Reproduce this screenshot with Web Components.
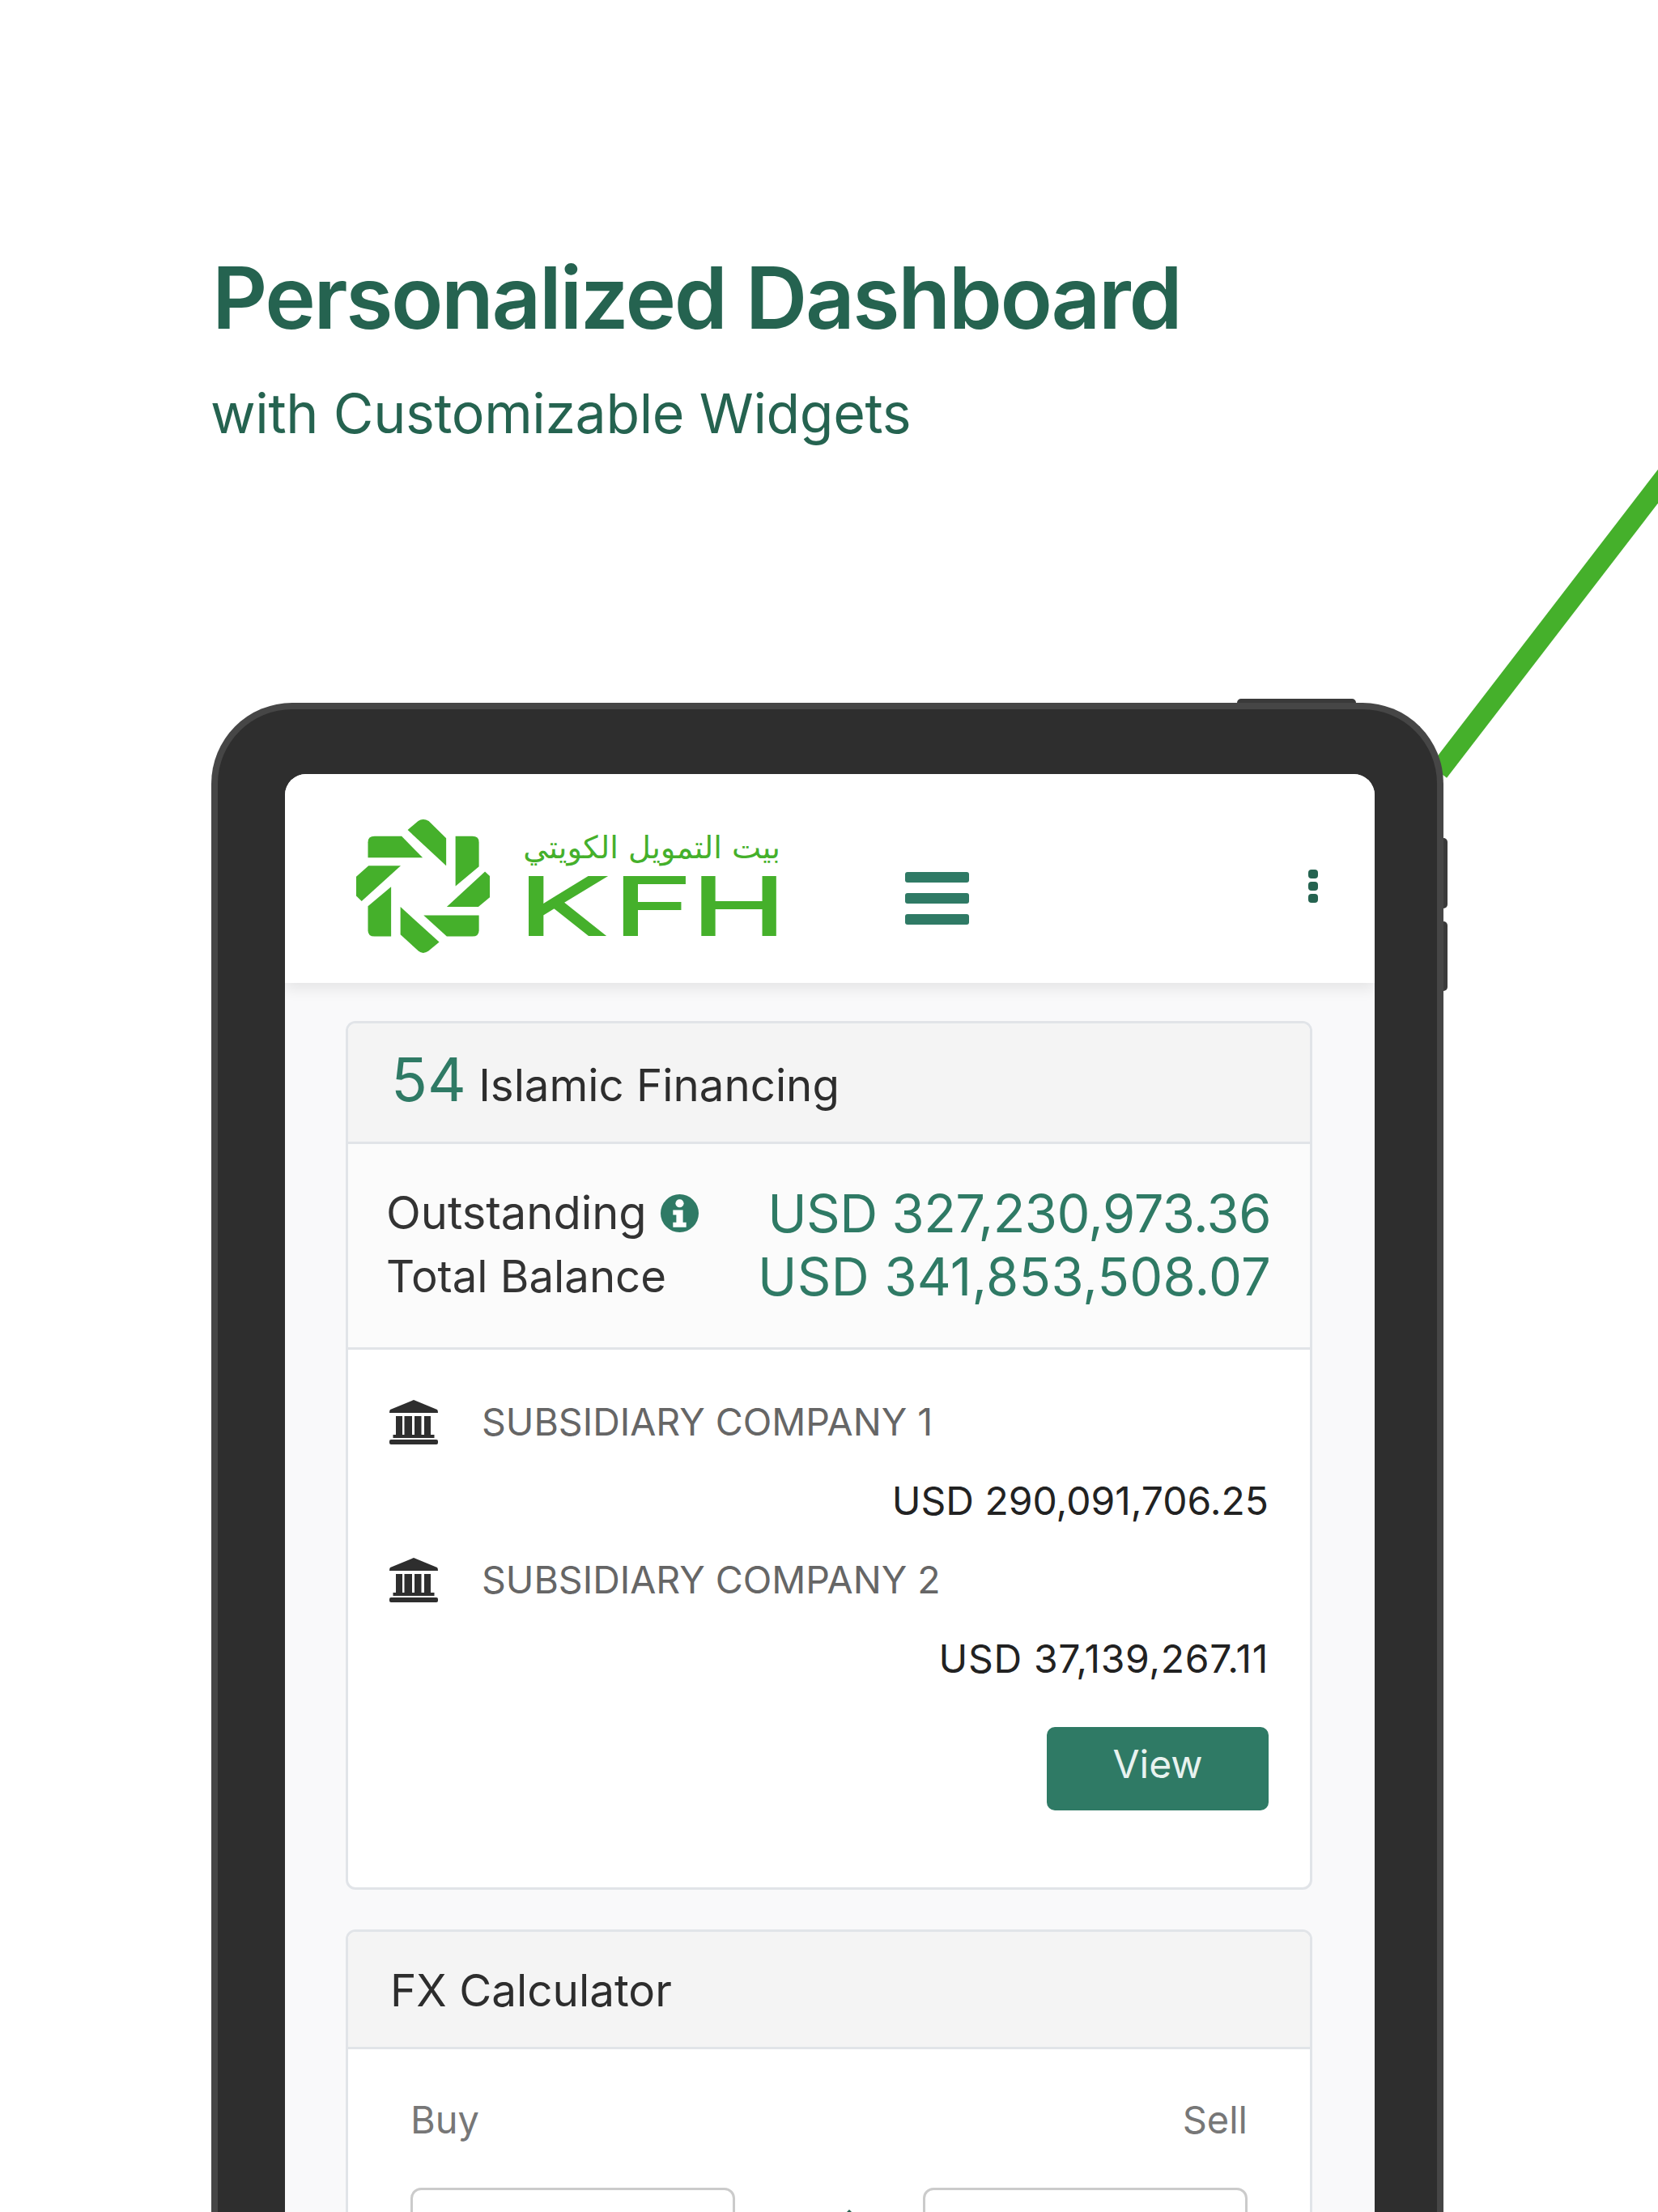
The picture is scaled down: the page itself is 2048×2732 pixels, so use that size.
<!DOCTYPE html>
<html>
<head>
<meta charset="utf-8">
<title>KFH dashboard</title>
<style>
  html, body { margin: 0; padding: 0; background: #fff; }
  body { width: 2048px; height: 2732px; overflow: hidden; position: relative; font-family: Inter, "Liberation Sans", sans-serif; }
</style>
</head>
<body>
<promo-page>
  <span slot="title">Personalized Dashboard</span>
  <span slot="subtitle">with Customizable Widgets</span>
  <tablet-frame>
    <app-header></app-header>
    <dash-card>
      <span slot="head"><span style="color:#2f7a65;font-size:74px">54</span> Islamic Financing</span>
      <balance-rows></balance-rows>
      <company-row name="SUBSIDIARY COMPANY 1" amount="USD 290,091,706.25"></company-row>
      <company-row name="SUBSIDIARY COMPANY 2" amount="USD 37,139,267.11" spacing="0.7px"></company-row>
      <view-button>View</view-button>
    </dash-card>
    <dash-card variant="fx">
      <span slot="head">FX Calculator</span>
      <fx-calc></fx-calc>
    </dash-card>
  </tablet-frame>
</promo-page>

<script>
const FONT = 'Inter, "Liberation Sans", sans-serif';

// page with the heading and the green stripe behind the tablet
class PromoPage extends HTMLElement {
  constructor() {
    super();
    this.attachShadow({mode: 'open'}).innerHTML = `
    <style>
      :host { display: block; position: relative; width: 2048px; height: 2732px; overflow: hidden; font-family: ${FONT}; }
      .stripe { position: absolute; left: 0; top: 0; }
      .head { position: relative; padding: 312px 0 0 262px; height: 556px; box-sizing: border-box; color: #256350; }
      .title { font-size: 106px; line-height: 112px; font-weight: 600; letter-spacing: -2.4px; }
      .sub { font-size: 68px; line-height: 80px; margin: 46px 0 0 -2px; letter-spacing: -0.37px; font-weight: 400; }
    </style>
    <svg class="stripe" width="2048" height="1000"><line x1="1777" y1="953" x2="2080" y2="559" stroke="#45b02b" stroke-width="25.4"/></svg>
    <div class="head">
      <div class="title"><slot name="title"></slot></div>
      <div class="sub"><slot name="subtitle"></slot></div>
    </div>
    <slot></slot>`;
  }
}

class TabletFrame extends HTMLElement {
  constructor() {
    super();
    this.attachShadow({mode: 'open'}).innerHTML = `
    <style>
      :host { display: block; position: relative; margin: 312px 0 0 261px; width: 1522px; height: 1900px; }
      .body { box-sizing: border-box; width: 100%; height: 100%; background: #2e2e2e; border: 8px solid #464646; border-bottom: 0; border-radius: 100px 100px 0 0; padding: 80px 77px 0 83px; }
      .screen { height: 100%; background: #f9f9fa; border-radius: 26px 26px 0 0; overflow: hidden; }
      .pad { display: flex; flex-direction: column; gap: 49px; padding: 47px 77px 0 75px; }
      .btn { position: absolute; background: #3a3a3a; }
      .top { left: 1267px; top: -5px; width: 147px; height: 5px; border-radius: 5px 5px 0 0; }
      .r1 { left: 1522px; top: 167px; width: 5px; height: 87px; border-radius: 0 5px 5px 0; }
      .r2 { left: 1522px; top: 270px; width: 5px; height: 86px; border-radius: 0 5px 5px 0; }
    </style>
    <div class="btn top"></div><div class="btn r1"></div><div class="btn r2"></div>
    <div class="body"><div class="screen">
      <slot name="bar"></slot>
      <div class="pad"><slot></slot></div>
    </div></div>`;
  }
  connectedCallback() {
    const h = this.querySelector('app-header');
    if (h) h.slot = 'bar';
  }
}

class AppHeader extends HTMLElement {
  constructor() {
    super();
    this.attachShadow({mode: 'open'}).innerHTML = `
    <style>
      :host { display: block; background: #fff; height: 258px; box-shadow: 0 8px 16px rgba(0,0,0,.08); position: relative; }
      .row { display: flex; align-items: flex-start; height: 100%; padding-left: 88px; }
      .star { margin-top: 56px; flex: none; }
      .word { margin-left: 47px; margin-top: 69px; width: 310px; flex: none; color: #45b02b; }
      .ar { font: 400 38.4px/44px "DejaVu Sans", sans-serif; height: 44px; direction: rtl; text-align: right; white-space: nowrap; margin-right: -2px; }
      .kfh { display: flex; margin-top: 14px; height: 73px; font: 200 93px/73px Inter, sans-serif; -webkit-text-stroke: 6px #45b02b; }
      .kfh span { display: block; flex: none; transform-origin: left center; height: 73px; overflow: visible; }
      .burger { margin: 121px 0 0 156px; width: 79px; display: flex; flex-direction: column; gap: 13px; flex: none; }
      .burger i { display: block; height: 13px; background: #2f7a65; border-radius: 3px; }
      .dots { margin: 118px 70px 0 auto; display: flex; flex-direction: column; gap: 4px; }
      .dots i { display: block; width: 12px; height: 11px; background: #256350; border-radius: 4px; }
    </style>
    <div class="row">
      <svg class="star" width="165" height="165" viewBox="84 -24 444 492" preserveAspectRatio="none" fill="#45b02b">
        <path d="M123 117V60Q123 38 145 38H235L305 117Z"/>
        <path d="M255 15L290 -18Q306 -30 325 -18L383 45V147Z"/>
        <path d="M414 38H470Q492 38 492 60V150L414 222Z"/>
        <path d="M512 168L548 205Q562 225 548 245L490 298H385Z"/>
        <path d="M308 329H492V385Q492 407 470 407H385Z"/>
        <path d="M231 298L360 428L325 460Q306 476 290 460L231 400Z"/>
        <path d="M123 296L200 224V407H145Q123 407 123 385Z"/>
        <path d="M232 147L102 277L65 238Q50 220 65 205L125 147Z"/>
      </svg>
      <div class="word">
        <div class="ar" lang="ar">بيت التمويل الكويتي</div>
        <div class="kfh"><span style="width:114px;transform:translateX(-11px) scaleX(1.78)">K</span><span style="width:101px;transform:translateX(-8px) scaleX(1.76)">F</span><span style="width:95px;transform:translateX(-12px) scaleX(1.68)">H</span></div>
      </div>
      <div class="burger"><i></i><i></i><i></i></div>
      <div class="dots"><i></i><i></i><i></i></div>
    </div>`;
  }
}

class DashCard extends HTMLElement {
  constructor() {
    super();
    this.attachShadow({mode: 'open'}).innerHTML = `
    <style>
      :host { display: block; background: #fff; border: 3px solid #e1e4e8; border-radius: 12px; overflow: hidden; }
      :host([variant="fx"]) .head { height: 145px; line-height: 144px; padding-left: 52px; font-size: 54.8px; }
      .head { box-sizing: border-box; height: 149px; padding: 0 0 0 53px; line-height: 139px; background: #f4f4f4; border-bottom: 3px solid #e1e4e8; font-size: 54.6px; color: #2d2d2d; white-space: nowrap; }
      .body { display: block; }
    </style>
    <div class="head"><slot name="head"></slot></div>
    <div class="body"><slot></slot></div>`;
  }
}

class BalanceRows extends HTMLElement {
  constructor() {
    super();
    this.attachShadow({mode: 'open'}).innerHTML = `
    <style>
      :host { display: block; box-sizing: border-box; height: 254px; background: #fbfbfb; border-bottom: 3px solid #e1e4e8; padding: 46px 48px 0 47px; }
      .row { display: flex; justify-content: space-between; align-items: center; height: 78px; }
      .l { font-size: 54.5px; color: #333; display: flex; align-items: center; gap: 17px; }
      .v { font-size: 65px; color: #2f7a65; white-space: nowrap; }
    </style>
    <div class="row"><span class="l" style="font-size:56px">Outstanding
      <svg width="47" height="47" viewBox="0 0 46 46"><circle cx="23" cy="23" r="23" fill="#2f7a65"/><circle cx="23" cy="11" r="5" fill="#fff"/><path d="M15 19h12v15h4v6H15v-6h4v-9h-4z" fill="#fff"/></svg>
    </span><span class="v" style="letter-spacing:-.5px">USD 327,230,973.36</span></div>
    <div class="row"><span class="l">Total Balance</span><span class="v" style="letter-spacing:.28px">USD 341,853,508.07</span></div>`;
  }
}

class CompanyRow extends HTMLElement {
  constructor() {
    super();
    const root = this.attachShadow({mode: 'open'});
    root.innerHTML = `
    <style>
      :host { display: block; height: 195px; padding: 60px 51px 0 51px; box-sizing: border-box; }
      .top { display: flex; align-items: center; gap: 54px; height: 58px; font-size: 46.5px; color: #666; white-space: nowrap; }
      .amt { text-align: right; font-size: 48px; color: #222; margin-top: 40px; line-height: 58px; }
    </style>
    <div class="top">
      <svg width="60" height="55" viewBox="0 0 60 55" fill="#2e2e2e">
        <path d="M30 0L59 12Q60 13 60 16H0Q0 13 1 12Z"/>
        <path d="M8 20H16V43H8ZM18.500 20H28V43H18.500ZM31 20H39.500V43H31ZM43 20H51V43H43Z"/>
        <rect x="4.500" y="43" width="51" height="4"/><rect y="49" width="60" height="6" rx="2"/>
      </svg>
      <span class="name"></span>
    </div>
    <div class="amt"></div>`;
    root.querySelector('.name').textContent = this.getAttribute('name');
    const amt = root.querySelector('.amt');
    amt.textContent = this.getAttribute('amount');
    if (this.hasAttribute('spacing')) amt.style.letterSpacing = this.getAttribute('spacing');
  }
}

class ViewButton extends HTMLElement {
  constructor() {
    super();
    this.attachShadow({mode: 'open'}).innerHTML = `
    <style>
      :host { display: block; height: 274px; padding: 76px 51px 0 0; box-sizing: border-box; }
      .b { margin-left: auto; width: 274px; height: 103px; background: #2f7a65; border-radius: 10px; color: #e8f2ef; font-size: 48px; line-height: 92px; text-align: center; }
    </style>
    <div class="b"><slot></slot></div>`;
  }
}

class FxCalc extends HTMLElement {
  constructor() {
    super();
    this.attachShadow({mode: 'open'}).innerHTML = `
    <style>
      :host { display: block; padding: 55px 77px 0 77px; height: 400px; box-sizing: border-box; }
      .labels { display: flex; justify-content: space-between; font-size: 47px; line-height: 64px; color: #777; }
      .boxes { display: flex; justify-content: space-between; margin-top: 52px; }
      .box { width: 401px; height: 120px; box-sizing: border-box; border: 3px solid #cbcbcb; border-radius: 13px; }
      .tip { width: 0; height: 0; margin: 27px 0 0 50px; border: 3px solid transparent; border-bottom-color: #256350; border-top: 0; }
    </style>
    <div class="labels"><span>Buy</span><span>Sell</span></div>
    <div class="boxes"><div class="box"></div><div class="tip"></div><div class="box"></div></div>`;
  }
}

customElements.define('promo-page', PromoPage);
customElements.define('tablet-frame', TabletFrame);
customElements.define('app-header', AppHeader);
customElements.define('dash-card', DashCard);
customElements.define('balance-rows', BalanceRows);
customElements.define('company-row', CompanyRow);
customElements.define('view-button', ViewButton);
customElements.define('fx-calc', FxCalc);
</script>
</body>
</html>
